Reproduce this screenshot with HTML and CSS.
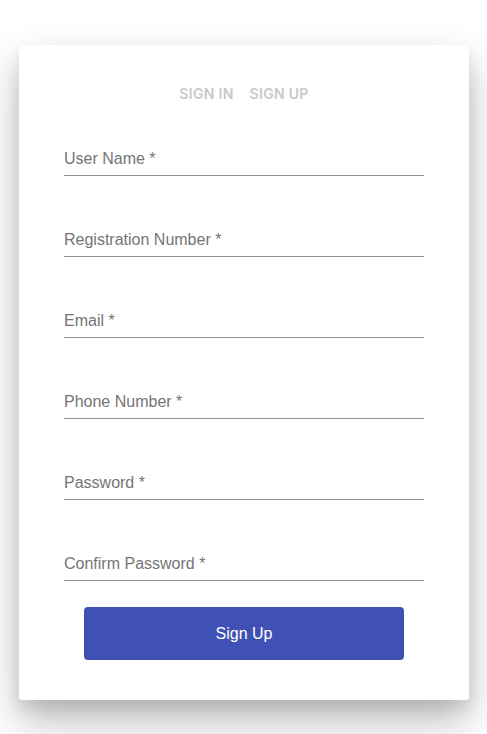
FILE: index.html
```html
<!DOCTYPE html>
<html lang="en">
<head>
<meta charset="utf-8">
<title>Sign Up</title>
<link rel="stylesheet" href="styles.css">
</head>
<body>
<main class="card">
  <nav class="tabs">
    <span class="tab">SIGN IN</span>
    <span class="tab">SIGN UP</span>
  </nav>
  <form class="form">
    <div class="field"><label class="label">User Name *</label></div>
    <div class="field"><label class="label">Registration Number *</label></div>
    <div class="field"><label class="label">Email *</label></div>
    <div class="field"><label class="label">Phone Number *</label></div>
    <div class="field"><label class="label">Password *</label></div>
    <div class="field"><label class="label">Confirm Password *</label></div>
    <button type="button" class="submit">Sign Up</button>
  </form>
</main>
</body>
</html>
```
FILE: styles.css
```css
html, body {
  margin: 0;
  padding: 0;
  background: #ffffff;
}
body {
  width: 487px;
  height: 734px;
  overflow: hidden;
  font-family: "Liberation Sans", Arial, sans-serif;
}
.card {
  box-sizing: border-box;
  width: 450px;
  margin: 45px 0 0 19px;
  padding: 39px 45px 40px;
  background: #fff;
  border-radius: 3px;
  box-shadow: 0 20px 40px rgba(0,0,0,0.28), 0 8px 14px rgba(0,0,0,0.08);
}
.tabs {
  display: flex;
  justify-content: center;
  gap: 16px;
}
.tab {
  font-family: Inter, "Open Sans", sans-serif;
  font-weight: 600;
  font-size: 14px;
  line-height: 20px;
  letter-spacing: 0.3px;
  color: #c9c9c9;
}
.form {
  display: flex;
  flex-direction: column;
  gap: 54px;
  margin-top: 45px;
}
.field {
  border-bottom: 1px solid #949494;
  padding-bottom: 7px;
}
.label {
  display: block;
  font-size: 16px;
  line-height: 19px;
  color: #757575;
}
.submit {
  align-self: center;
  width: 320px;
  height: 53px;
  margin-top: -28px;
  border: 0;
  border-radius: 4px;
  background: #3f51b5;
  color: #fff;
  font-family: "Liberation Sans", Arial, sans-serif;
  font-size: 16px;
}
```
